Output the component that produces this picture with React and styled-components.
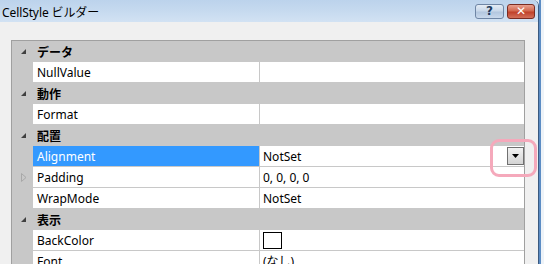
import React from "react";
import styled, { createGlobalStyle } from "styled-components";

const Global = createGlobalStyle`
  html, body { margin: 0; padding: 0; background: #dfe9f5; }
  body { width: 544px; height: 264px; overflow: hidden; }
  #root { width: 544px; height: 264px; }
`;

const Page = styled.div`
  display: flex;
  width: 544px;
  height: 264px;
  overflow: hidden;
  position: relative;
  font-family: "Noto Sans", "Noto Sans CJK JP", sans-serif;
`;

const Window = styled.div`
  width: 538px;
  height: 264px;
  display: flex;
  flex-direction: column;
  background: #f0f0f0;
  border-right: 1px solid #3b5a80;
  border-top-right-radius: 6px;
  overflow: hidden;
`;

const Outside = styled.div`
  flex: 1;
  background: linear-gradient(90deg, #5c8cc4 0, #5c8cc4 2px, #eef3f8 2px);
`;

const TitleBar = styled.div`
  height: 22px;
  flex: none;
  display: flex;
  align-items: center;
  padding: 0 3px 0 2px;
  background: linear-gradient(180deg, #bcd3ec 0%, #c6daef 50%, #d2e2f3 100%);
`;

const Title = styled.div`
  flex: 1;
  font-size: 12px;
  color: #000;
  padding-top: 1px;
  letter-spacing: -0.1px;
`;

const CapButton = styled.div`
  width: ${(p) => p.$w}px;
  height: 15px;
  margin-left: ${(p) => p.$ml}px;
  border: 1px solid ${(p) => (p.$close ? "#7a2c22" : "#6f86a5")};
  border-radius: 3px;
  display: flex;
  align-items: center;
  justify-content: center;
  box-sizing: border-box;
  background: ${(p) =>
    p.$close
      ? "linear-gradient(180deg, #e8a08f 0%, #d2684f 45%, #c0412a 55%, #d3705a 100%)"
      : "linear-gradient(180deg, #e4ecf5 0%, #c9d8ea 45%, #b3c7df 55%, #c9d9ec 100%)"};
  font-family: "DejaVu Sans", sans-serif;
  font-weight: bold;
  font-size: 12px;
  color: ${(p) => (p.$close ? "#fff" : "#203a5c")};
  line-height: 1;
`;

const Body = styled.div`
  flex: 1;
  padding: 18px 13px 0 11px;
  overflow: hidden;
`;

const Grid = styled.div`
  border: 1px solid #a0a0a0;
  border-bottom: none;
  background: #c8c8c8;
  font-size: 12px;
`;

const CategoryRow = styled.div`
  display: flex;
  align-items: center;
  height: 21px;
  background: #c8c8c8;
  font-weight: bold;
`;

const PropRow = styled.div`
  display: grid;
  grid-template-columns: 21px 227px 1fr;
  height: 21px;
  box-sizing: border-box;
  border-bottom: 1px solid #c8c8c8;
`;

const Gutter = styled.div`
  width: 21px;
  flex: none;
  display: flex;
  align-items: center;
  justify-content: center;
  background: #c8c8c8;
  padding-left: 2px;
  box-sizing: border-box;
`;

const NameCell = styled.div`
  display: flex;
  align-items: center;
  padding-left: 4px;
  background: ${(p) => (p.$selected ? "#3399ff" : "#fff")};
  color: ${(p) => (p.$selected ? "#fff" : "#000")};
  border-right: 1px solid #c8c8c8;
  white-space: nowrap;
`;

const ValueCell = styled.div`
  position: relative;
  display: flex;
  align-items: center;
  padding-left: 3px;
  background: #fff;
  white-space: nowrap;
`;

const CatLabel = styled.span`
  padding-left: 4px;
`;

const ColorSwatch = styled.div`
  width: 19px;
  height: 17px;
  box-sizing: border-box;
  border: 1px solid #000;
  background: #fff;
`;

const DropButton = styled.div`
  position: absolute;
  right: 0;
  top: 1px;
  width: 17px;
  height: 18px;
  box-sizing: border-box;
  border: 1px solid #707070;
  background: linear-gradient(180deg, #f2f2f2 0%, #e3e3e3 50%, #d4d4d4 100%);
  display: flex;
  align-items: center;
  justify-content: center;
`;

const Highlight = styled.div`
  position: absolute;
  left: 490px;
  top: 139px;
  width: 47px;
  height: 38px;
  box-sizing: border-box;
  border: 3px solid #f5a9bb;
  border-radius: 9px;
  pointer-events: none;
`;

const Expanded = () => (
  <svg width="6" height="6" viewBox="0 0 6 6">
    <polygon points="5,0 5,5 0,5" fill="#404040" />
  </svg>
);

const Collapsed = () => (
  <svg width="6" height="9" viewBox="0 0 6 9">
    <polygon points="0.5,0.5 5,4.5 0.5,8.5" fill="none" stroke="#a8a8a8" strokeWidth="1" />
  </svg>
);

const rows = [
  { cat: "データ" },
  { name: "NullValue", value: "" },
  { cat: "動作" },
  { name: "Format", value: "" },
  { cat: "配置" },
  { name: "Alignment", value: "NotSet", selected: true, drop: true },
  { name: "Padding", value: "0, 0, 0, 0", expandable: true },
  { name: "WrapMode", value: "NotSet" },
  { cat: "表示" },
  { name: "BackColor", swatch: true },
  { name: "Font", value: "(なし)" },
];

export default function App() {
  return (
    <Page>
      <Global />
      <Window>
        <TitleBar>
          <Title>CellStyle ビルダー</Title>
          <CapButton $w={29} $ml={0}>?</CapButton>
          <CapButton $w={28} $ml={3} $close>✕</CapButton>
        </TitleBar>
        <Body>
          <Grid>
            {rows.map((r, i) =>
              r.cat ? (
                <CategoryRow key={i}>
                  <Gutter><Expanded /></Gutter>
                  <CatLabel>{r.cat}</CatLabel>
                </CategoryRow>
              ) : (
                <PropRow key={i}>
                  <Gutter>{r.expandable ? <Collapsed /> : null}</Gutter>
                  <NameCell $selected={r.selected}>{r.name}</NameCell>
                  <ValueCell>
                    {r.swatch ? <ColorSwatch /> : r.value}
                    {r.drop ? (
                      <DropButton>
                        <svg width="7" height="4" viewBox="0 0 7 4">
                          <polygon points="0,0 7,0 3.5,4" fill="#000" />
                        </svg>
                      </DropButton>
                    ) : null}
                  </ValueCell>
                </PropRow>
              )
            )}
          </Grid>
        </Body>
      </Window>
      <Outside />
      <Highlight />
    </Page>
  );
}
